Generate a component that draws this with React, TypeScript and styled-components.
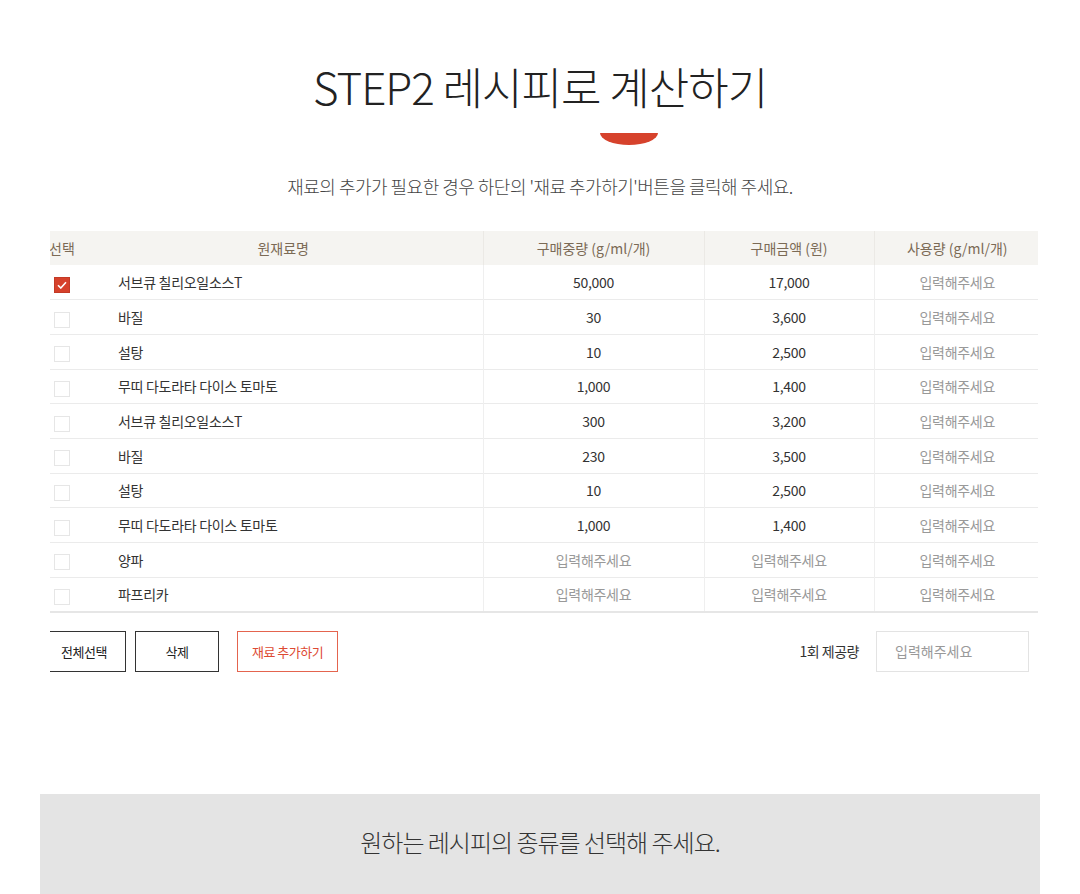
import React from 'react';
import styled, { createGlobalStyle } from 'styled-components';

const GlobalStyle = createGlobalStyle`
  html, body {
    margin: 0;
    padding: 0;
    background: #fff;
  }
  body {
    font-family: "Noto Sans CJK KR", "Noto Sans", sans-serif;
    color: #333;
  }
  * {
    box-sizing: border-box;
  }
`;

interface IIngredient {
  name: string;
  weight?: string;
  price?: string;
  checked?: boolean;
}

const ingredients: IIngredient[] = [
  { name: '서브큐 칠리오일소스T', weight: '50,000', price: '17,000', checked: true },
  { name: '바질', weight: '30', price: '3,600' },
  { name: '설탕', weight: '10', price: '2,500' },
  { name: '무띠 다도라타 다이스 토마토', weight: '1,000', price: '1,400' },
  { name: '서브큐 칠리오일소스T', weight: '300', price: '3,200' },
  { name: '바질', weight: '230', price: '3,500' },
  { name: '설탕', weight: '10', price: '2,500' },
  { name: '무띠 다도라타 다이스 토마토', weight: '1,000', price: '1,400' },
  { name: '양파' },
  { name: '파프리카' },
];

const PLACEHOLDER = '입력해주세요';

export default function App() {
  return (
    <>
      <GlobalStyle />
      <Page>
        <Title>STEP2 레시피로 계산하기</Title>
        <Dot />
        <Guide>재료의 추가가 필요한 경우 하단의 '재료 추가하기'버튼을 클릭해 주세요.</Guide>

        <Viewport>
          <Inner>
            <Table>
              <colgroup>
                <col style={{ width: 44 }} />
                <col style={{ width: 399 }} />
                <col style={{ width: 221 }} />
                <col style={{ width: 170 }} />
                <col style={{ width: 166 }} />
              </colgroup>
              <thead>
                <tr>
                  <HeadCell>선택</HeadCell>
                  <HeadCell $divider>원재료명</HeadCell>
                  <HeadCell $divider>구매중량 (g/ml/개)</HeadCell>
                  <HeadCell $divider>구매금액 (원)</HeadCell>
                  <HeadCell>사용량 (g/ml/개)</HeadCell>
                </tr>
              </thead>
              <tbody>
                {ingredients.map((item, i) => (
                  <Row key={i}>
                    <Cell $align="center">
                      <CheckBox $checked={item.checked}>
                        {item.checked && (
                          <svg width="10" height="8" viewBox="0 0 10 8">
                            <path d="M1 4.2 L3.8 7 L9 1.2" fill="none" stroke="#fff" strokeWidth="1.6" />
                          </svg>
                        )}
                      </CheckBox>
                    </Cell>
                    <NameCell $divider>{item.name}</NameCell>
                    <Cell $divider $muted={!item.weight}>{item.weight ?? PLACEHOLDER}</Cell>
                    <Cell $divider $muted={!item.price}>{item.price ?? PLACEHOLDER}</Cell>
                    <Cell $muted>{PLACEHOLDER}</Cell>
                  </Row>
                ))}
              </tbody>
            </Table>

            <Actions>
              <ButtonGroup>
                <ActionButton>전체선택</ActionButton>
                <ActionButton>삭제</ActionButton>
                <ActionButton $accent>재료 추가하기</ActionButton>
              </ButtonGroup>
              <Serving>
                <ServingLabel>1회 제공량</ServingLabel>
                <ServingInput placeholder={PLACEHOLDER} />
                <Unit>g</Unit>
              </Serving>
            </Actions>
          </Inner>
        </Viewport>

        <NextStep>원하는 레시피의 종류를 선택해 주세요.</NextStep>
      </Page>
    </>
  );
}

const Page = styled.div`
  width: 1000px;
  margin: 0 auto;
  padding-top: 56px;
  display: flex;
  flex-direction: column;
  align-items: center;
`;

const Title = styled.h1`
  margin: 0;
  font-size: 44px;
  font-weight: 300;
  line-height: 60px;
  color: #222;
  letter-spacing: -1px;
`;

const Dot = styled.div`
  width: 58px;
  height: 12px;
  margin: 17px 0 0 178px;
  background: #d6422c;
  border-radius: 0 0 29px 29px / 0 0 12px 12px;
`;

const Guide = styled.p`
  margin: 28px 0 0;
  font-size: 18px;
  font-weight: 300;
  line-height: 26px;
  color: #444;
  letter-spacing: -0.5px;
`;

const Viewport = styled.div`
  align-self: flex-start;
  margin: 32px 0 0 10px;
  width: 988px;
  overflow: hidden;
`;

const Inner = styled.div`
  width: 1000px;
  margin-left: -10px;
`;

const Table = styled.table`
  width: 1000px;
  border-collapse: collapse;
  table-layout: fixed;
  border-bottom: 2px solid #e6e6e6;
`;

const HeadCell = styled.th<{ $divider?: boolean }>`
  height: 34px;
  padding: 0;
  background: #f5f4f1;
  color: #7b6a55;
  font-size: 14px;
  font-weight: 400;
  text-align: center;
  border-right: ${({ $divider }) => ($divider ? '1px solid #ebe9e5' : 'none')};
`;

const Row = styled.tr`
  height: 34.7px;
  border-top: 1px solid #ebebeb;

  &:first-child {
    border-top: none;
  }
`;

const Cell = styled.td<{ $divider?: boolean; $muted?: boolean; $align?: string }>`
  padding: 0;
  font-size: 14px;
  text-align: ${({ $align }) => $align ?? 'center'};
  color: ${({ $muted }) => ($muted ? '#999' : '#333')};
  border-right: ${({ $divider }) => ($divider ? '1px solid #efefef' : 'none')};
  letter-spacing: -0.3px;
`;

const NameCell = styled(Cell)`
  text-align: left;
  padding-left: 34px;
`;

const CheckBox = styled.span<{ $checked?: boolean }>`
  display: inline-flex;
  align-items: center;
  justify-content: center;
  width: 16px;
  height: 16px;
  margin-top: 2px;
  vertical-align: middle;
  background: ${({ $checked }) => ($checked ? '#d6412b' : '#fff')};
  border: 1px solid ${({ $checked }) => ($checked ? '#c33a26' : '#e6e6e6')};
`;

const Actions = styled.div`
  display: flex;
  justify-content: space-between;
  align-items: center;
  margin-top: 18px;
  margin-right: -10px;
  padding-left: 2px;
`;

const ButtonGroup = styled.div`
  display: flex;
  gap: 9px;

  & > button:last-child {
    margin-left: 9px;
  }
`;

const ActionButton = styled.button<{ $accent?: boolean }>`
  height: 41px;
  min-width: 84px;
  padding: 0 14px;
  background: #fff;
  font-family: inherit;
  font-size: 13px;
  color: ${({ $accent }) => ($accent ? '#dd4a33' : '#222')};
  border: 1px solid ${({ $accent }) => ($accent ? '#e4644e' : '#333')};
  letter-spacing: -0.5px;
  cursor: pointer;
`;

const Serving = styled.div`
  display: flex;
  align-items: center;
`;

const ServingLabel = styled.span`
  font-size: 14px;
  color: #333;
  margin-right: 17px;
  letter-spacing: -0.5px;
`;

const ServingInput = styled.input`
  width: 153px;
  height: 41px;
  padding: 0 18px;
  border: 1px solid #e3e3e3;
  font-family: inherit;
  font-size: 14px;
  outline: none;

  &::placeholder {
    color: #999;
  }
`;

const Unit = styled.span`
  width: 11px;
  margin-left: 10px;
  font-size: 14px;
  color: #999;
`;

const NextStep = styled.div`
  margin-top: 122px;
  width: 1000px;
  height: 110px;
  background: #e4e4e4;
  display: flex;
  justify-content: center;
  padding-top: 30px;
  font-size: 24px;
  font-weight: 300;
  color: #333;
  letter-spacing: -1px;
`;
